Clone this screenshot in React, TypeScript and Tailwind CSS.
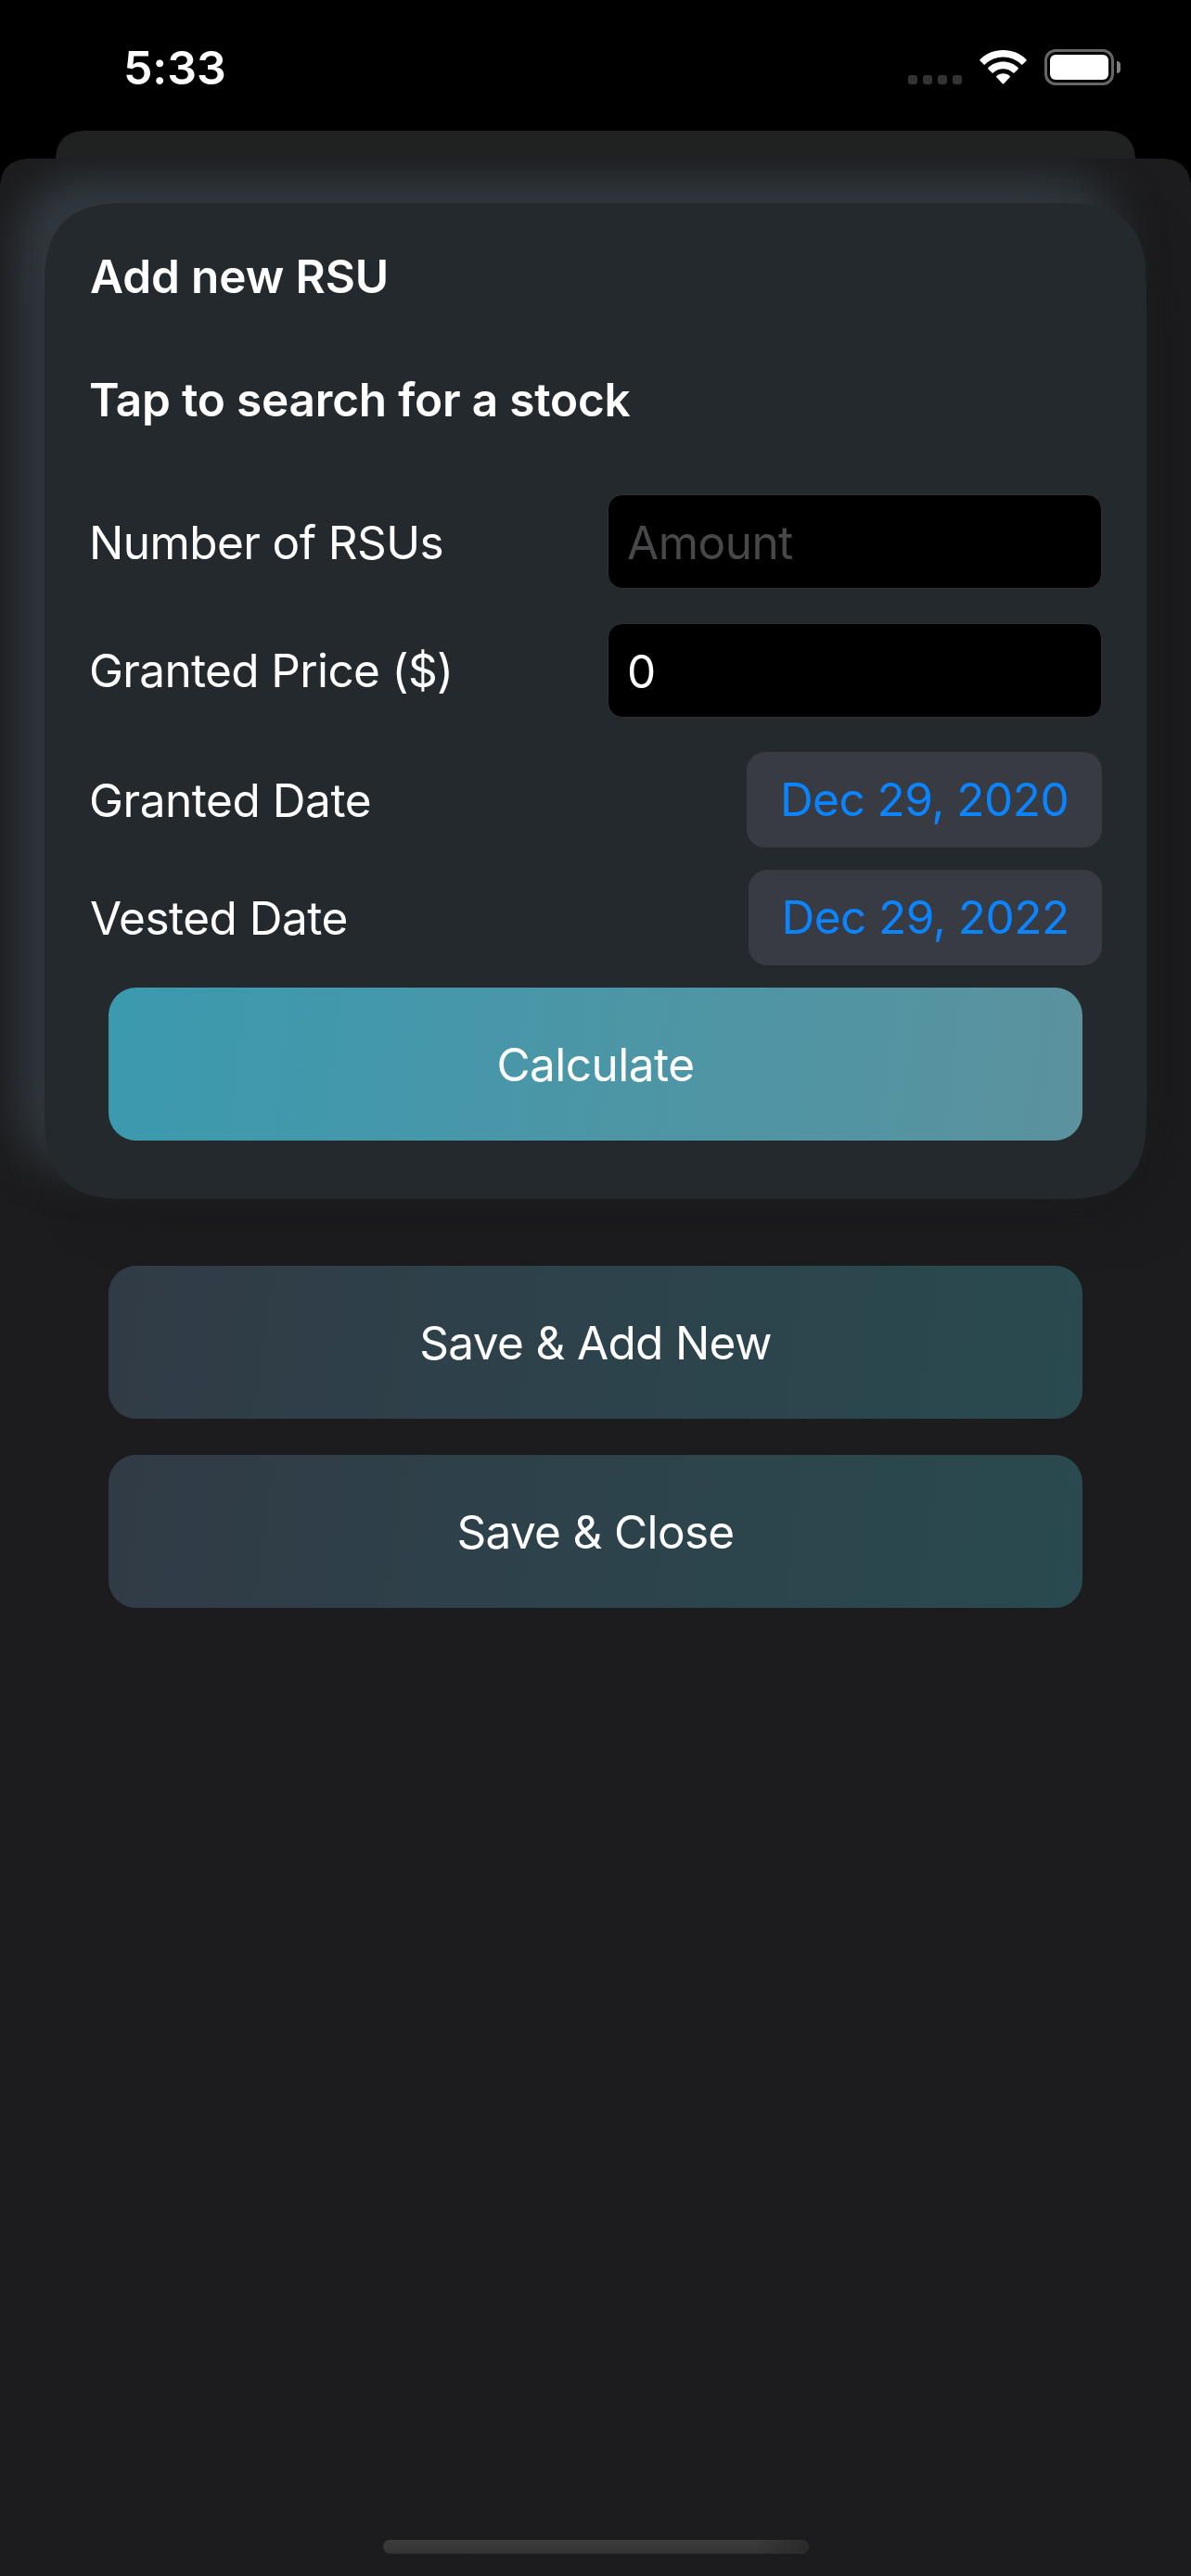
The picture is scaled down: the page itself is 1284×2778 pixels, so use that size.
import type { ReactNode } from "react";

function StatusBar() {
  return (
    <header className="flex h-[141px] shrink-0 justify-between pl-[133px] pr-[76px]">
      <time className="mt-[43px] text-[50px] leading-[60px] font-semibold tracking-[-0.1px]">5:33</time>
      <div className="mt-[53px] flex h-[39px]">
        <div className="mt-[28px] flex gap-[6px]">
          {[0, 1, 2, 3].map((dot) => (
            <span key={dot} className="size-[10px] rounded-[3px] bg-[#333333]" />
          ))}
        </div>
        <svg className="mt-[1px] ml-[19px] h-[37px] w-[51px]" viewBox="0 0 51 37" fill="#fff">
          <path d="M25.5 0C35 0 43.8 3.6 50.5 10.2C50.9 10.6 50.9 11.1 50.5 11.5L46.4 15.5C46 15.9 45.4 15.9 45 15.5C39.7 10.4 32.8 7.6 25.5 7.6C18.2 7.6 11.3 10.4 6 15.5C5.6 15.9 5 15.9 4.6 15.5L0.5 11.5C0.1 11.1 0.1 10.6 0.5 10.2C7.2 3.6 16 0 25.5 0Z" />
          <path d="M25.5 12.6C31.6 12.6 37.3 14.9 41.6 19C42 19.4 42 20 41.6 20.4L37.5 24.5C37.1 24.9 36.6 24.9 36.2 24.5C33.3 21.8 29.5 20.3 25.5 20.3C21.5 20.3 17.7 21.8 14.8 24.5C14.4 24.9 13.9 24.9 13.5 24.5L9.4 20.4C9 20 9 19.4 9.4 19C13.7 14.9 19.4 12.6 25.5 12.6Z" />
          <path d="M25.5 25.3C28.2 25.3 30.7 26.3 32.7 28C33.1 28.4 33.1 28.9 32.7 29.3L26.2 36.2C25.8 36.6 25.2 36.6 24.8 36.2L18.3 29.3C17.9 28.9 17.9 28.4 18.3 28C20.3 26.3 22.8 25.3 25.5 25.3Z" />
        </svg>
        <div className="ml-[19px] h-[39px] w-[75px] rounded-[12px] border-[3px] border-[#666666] p-[3px]">
          <div className="h-full rounded-[6px] bg-white" />
        </div>
        <span className="mt-[13px] ml-[3px] h-[13px] w-[4px] rounded-r-full bg-[#808080]" />
      </div>
    </header>
  );
}

function Field({ label, labelClass, children }: { label: string; labelClass: string; children: ReactNode }) {
  return (
    <label className="flex items-center justify-between">
      <span className={labelClass}>{label}</span>
      {children}
    </label>
  );
}

function ActionButton({ tone, children }: { tone: string; children: ReactNode }) {
  return (
    <button className={`flex h-[165px] w-full items-center justify-center rounded-[30px] leading-[60px] ${tone}`}>
      {children}
    </button>
  );
}

const INPUT =
  "mr-[-2px] h-[102px] w-[533px] rounded-[16px] border border-[#2c3033] bg-black pt-[2px] pl-[20px] text-white placeholder:text-[#48484a] placeholder:opacity-100 outline-none";
const DATE =
  "mr-[-2px] flex h-[103px] items-center justify-center rounded-[20px] bg-[#393b43] text-[#0a84ff]";
const SLATE = "bg-linear-[98deg,#313b46,#294a4f]";
const TEAL = "bg-linear-[98deg,#3b9aaf,#5b929e]";

export default function App() {
  return (
    <main className="flex h-[2778px] w-[1284px] flex-col overflow-hidden bg-black font-['Inter',sans-serif] text-[49.5px] tracking-[-0.52px] text-white">
      <StatusBar />
      <div className="mx-[60px] h-[60px] shrink-0 rounded-t-[34px] bg-[#202121] [corner-shape:superellipse(1.3)]" />
      <section className="-mt-[30px] flex grow flex-col overflow-hidden rounded-t-[34px] bg-[#1c1c1e] px-[48px] pt-[48px] [corner-shape:superellipse(1.3)]">
        <div className="flex flex-col rounded-[92px] bg-[#24292d] px-[50px] pt-[49px] pb-[63px] shadow-[30px_30px_45px_rgba(26,26,28,0.4),-28px_-28px_46px_#323b41] [corner-shape:superellipse(1.45)]">
          <h1 className="-ml-px leading-[60px] font-semibold tracking-[-0.1px]">Add new RSU</h1>
          <button className="mt-[73px] -ml-[2px] self-start leading-[60px] font-semibold tracking-[-0.2px]">
            Tap to search for a stock
          </button>
          <div className="mt-[72px] flex flex-col gap-[37px]">
            <Field label="Number of RSUs" labelClass="-ml-[2px] pt-[2px] tracking-[-0.58px]">
              <input className={INPUT} placeholder="Amount" />
            </Field>
            <Field label="Granted Price ($)" labelClass="-ml-[2px] pt-px tracking-[-0.64px]">
              <input className={INPUT} defaultValue="0" />
            </Field>
          </div>
          <div className="mt-[37px] flex flex-col gap-[24px]">
            <Field label="Granted Date" labelClass="-ml-[2px] pt-px tracking-[-0.45px]">
              <button className={`${DATE} w-[383px]`}>Dec 29, 2020</button>
            </Field>
            <Field label="Vested Date" labelClass="-ml-px pt-px">
              <button className={`${DATE} w-[381px]`}>Dec 29, 2022</button>
            </Field>
          </div>
          <div className="mt-[24px] px-[19px]">
            <ActionButton tone={TEAL}>Calculate</ActionButton>
          </div>
        </div>
        <div className="mt-[72px] flex flex-col gap-[39px] px-[69px] tracking-[-0.66px]">
          <ActionButton tone={SLATE}>Save &amp; Add New</ActionButton>
          <ActionButton tone={SLATE}>Save &amp; Close</ActionButton>
        </div>
        <div className="mt-auto mb-[24px] flex h-[15px] w-[459px] justify-end self-center overflow-hidden rounded-full bg-linear-to-b from-[#3c3c3c] to-[#343434]">
          <div className="w-[60px] bg-linear-to-r from-transparent to-[#2a2a2a]" />
        </div>
      </section>
    </main>
  );
}
